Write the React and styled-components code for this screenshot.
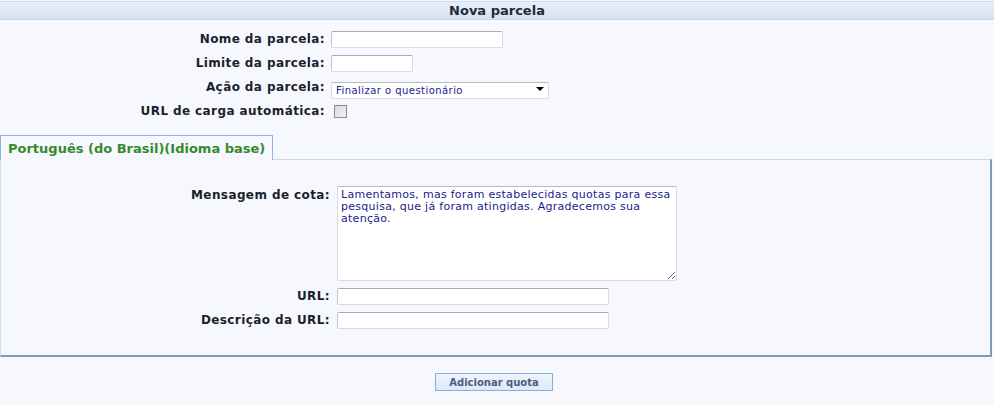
import styled, { createGlobalStyle } from 'styled-components';

const GlobalStyle = createGlobalStyle`
  html, body {
    margin: 0;
    padding: 0;
    background: #f7f8fd;
    font-family: "DejaVu Sans", Verdana, sans-serif;
  }
`;

const Page = styled.div`
  width: 994px;
  padding-top: 1px;
`;

const TitleBar = styled.div`
  height: 17px;
  border-top: 1px solid #cfd8e8;
  border-bottom: 1px solid #c8d5e8;
  background: linear-gradient(to bottom, #e8eef8 0%, #e1e9f4 55%, #d4e1f0 100%);
  display: flex;
  align-items: center;
  justify-content: center;
  font-size: 13px;
  font-weight: bold;
  color: #1d2b3b;
`;

const Form = styled.div`
  display: grid;
  grid-template-columns: ${p => p.$labelWidth}px 1fr;
  column-gap: ${p => p.$gap}px;
  row-gap: 6px;
  align-items: center;
  padding-top: ${p => p.$top || 0}px;
`;

const Label = styled.label`
  text-align: right;
  font-size: 12px;
  letter-spacing: 0.4px;
  font-weight: bold;
  color: #1a1f2e;
  line-height: 18px;
  align-self: ${p => (p.$top ? 'start' : 'center')};
  white-space: nowrap;
`;

const Cell = styled.div`
  display: flex;
  align-items: center;
  min-height: 18px;
`;

const TextInput = styled.input`
  box-sizing: border-box;
  width: ${p => p.$w}px;
  height: 17px;
  margin: 0;
  padding: 0 3px;
  border: 1px solid #dadce2;
  border-top-color: #a9acb4;
  border-left-color: #c4c6cc;
  border-radius: 2px;
  background: #fff;
  font-family: "DejaVu Sans", Verdana, sans-serif;
  font-size: 10px;
  color: #1b1b8a;
  outline: none;
`;

const SelectWrap = styled.div`
  position: relative;
  width: 218px;
  height: 17px;
`;

const Select = styled.select`
  appearance: none;
  box-sizing: border-box;
  width: 100%;
  height: 17px;
  margin: 0;
  padding: 0 0 0 4px;
  border: 1px solid #dadce2;
  border-top-color: #b6b9c0;
  border-radius: 2px;
  background: #fff;
  font-family: "DejaVu Sans", Verdana, sans-serif;
  font-size: 10px;
  letter-spacing: 0.45px;
  color: #1b1b8a;
  outline: none;
`;

const Arrow = styled.span`
  position: absolute;
  right: 5px;
  top: 8px;
  width: 0;
  height: 0;
  border-left: 4px solid transparent;
  border-right: 4px solid transparent;
  border-top: 4px solid #000;
  pointer-events: none;
`;

const Check = styled.input`
  appearance: none;
  box-sizing: border-box;
  width: 13px;
  height: 13px;
  margin: 0 0 0 3px;
  border: 1px solid #8a8c92;
  background: linear-gradient(135deg, #d8d9dc 0%, #f4f4f6 100%);
`;

const Tabs = styled.div`
  display: flex;
  margin-top: 15px;
`;

const Tab = styled.div`
  box-sizing: border-box;
  height: 25px;
  padding: 0 7px 0 7px;
  border: 1px solid #8fb4ea;
  border-bottom: none;
  background: #f7f8fd;
  color: #358a2c;
  font-size: 13px;
  font-weight: bold;
  display: flex;
  align-items: center;
  position: relative;
  z-index: 1;
  margin-bottom: -1px;
`;

const Panel = styled.div`
  box-sizing: border-box;
  width: 992px;
  border-top: 1px solid #c9d7ee;
  border-left: 1px solid #d2def1;
  border-right: 2px solid #7f98c4;
  border-bottom: 2px solid #7f98c4;
  padding: 26px 0 26px 0;
`;

const TextArea = styled.textarea`
  box-sizing: border-box;
  width: 340px;
  height: 95px;
  margin: 0;
  padding: 2px 1px 2px 3px;
  border: 1px solid #dadce2;
  border-top-color: #b6b9c0;
  border-radius: 2px;
  background: #fff;
  font-family: "DejaVu Sans", Verdana, sans-serif;
  font-size: 11px;
  letter-spacing: 0.28px;
  line-height: 12px;
  color: #1b1b8a;
  outline: none;
`;

const Actions = styled.div`
  display: flex;
  justify-content: center;
  padding-top: 16px;
  padding-right: 6px;
`;

const Button = styled.button`
  box-sizing: border-box;
  width: 118px;
  height: 18px;
  padding: 0;
  border: 1px solid #7db3e2;
  background: linear-gradient(to bottom, #eef4fb 0%, #dbe9f7 100%);
  font-family: "DejaVu Sans", Verdana, sans-serif;
  font-size: 10px;
  font-weight: bold;
  color: #4d5a86;
  cursor: pointer;
`;

export default function App() {
  return (
    <Page>
      <GlobalStyle />
      <TitleBar>Nova parcela</TitleBar>

      <Form $labelWidth={325} $gap={6} $top={10}>
        <Label>Nome da parcela:</Label>
        <Cell><TextInput $w={172} /></Cell>
        <Label>Limite da parcela:</Label>
        <Cell><TextInput $w={82} /></Cell>
        <Label>Ação da parcela:</Label>
        <Cell>
          <SelectWrap>
            <Select defaultValue="fim">
              <option value="fim">Finalizar o questionário</option>
            </Select>
            <Arrow />
          </SelectWrap>
        </Cell>
        <Label>URL de carga automática:</Label>
        <Cell><Check type="checkbox" /></Cell>
      </Form>

      <Tabs>
        <Tab>Português (do Brasil)(Idioma base)</Tab>
      </Tabs>
      <Panel>
        <Form $labelWidth={329} $gap={7}>
          <Label $top>Mensagem de cota:</Label>
          <Cell>
            <TextArea defaultValue="Lamentamos, mas foram estabelecidas quotas para essa pesquisa, que já foram atingidas. Agradecemos sua atenção." />
          </Cell>
          <Label>URL:</Label>
          <Cell><TextInput $w={272} /></Cell>
          <Label>Descrição da URL:</Label>
          <Cell><TextInput $w={272} /></Cell>
        </Form>
      </Panel>

      <Actions>
        <Button>Adicionar quota</Button>
      </Actions>
    </Page>
  );
}
